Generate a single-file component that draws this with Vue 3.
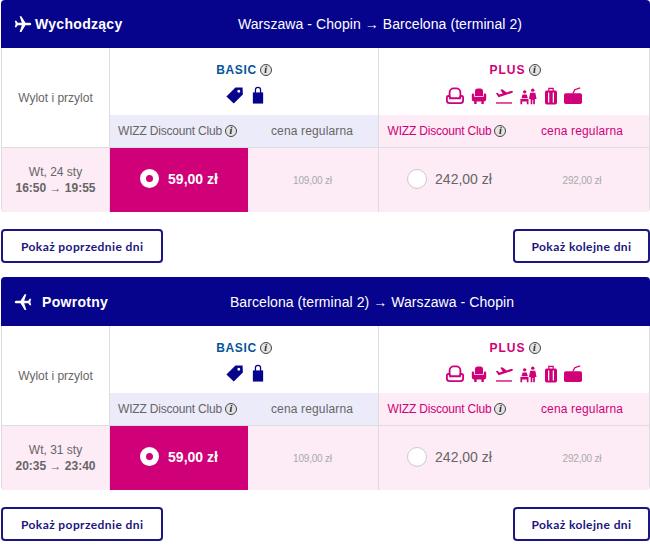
<template>
  <div class="page">
    <section v-for="flight in flights" :key="flight.id" class="flight">
      <header class="flight-head" :class="flight.id">
        <div class="flight-type">
          <svg class="plane" :class="{ back: flight.id === 'back' }" viewBox="0 0 24 24" width="18" height="18">
            <path fill="#fff" d="M23 12c0-1-1-1.800-2.400-1.800h-5.300L9.800 1.500H7.500l2.900 8.700H5L3.100 7.600H1l1.200 4.400L1 16.400h2.100L5 13.800h5.400l-2.900 8.700h2.300l5.500-8.700h5.300C22 13.800 23 13 23 12z" />
          </svg>
          <span>{{ flight.label }}</span>
        </div>
        <div class="flight-route">{{ flight.route }}</div>
      </header>

      <div class="fares">
        <div class="time-label">Wylot i przylot</div>

        <div class="bundle basic">
          <div class="bundle-name">BASIC <i class="info">i</i></div>
          <div class="bundle-icons">
            <svg viewBox="0 0 20 20" width="19" height="19">
              <path fill="#06038d" fill-rule="evenodd" d="M11 1.500l7.500.2.300 7.300-9.600 9.500L1.500 11zM14.500 4a1.500 1.500 0 1 0 .01 0z" />
            </svg>
            <svg viewBox="0 0 14 20" width="12" height="18">
              <path fill="#06038d" d="M1 7h12v13H1z" />
              <path fill="none" stroke="#06038d" stroke-width="1.500" d="M4 8V4a3 3 0 0 1 6 0v4" />
            </svg>
          </div>
        </div>

        <div class="bundle plus">
          <div class="bundle-name">PLUS <i class="info">i</i></div>
          <div class="bundle-icons pink">
            <svg viewBox="0 0 20 20" width="18" height="18">
              <path fill="none" stroke="#cf0078" stroke-width="2" d="M4 11V6a4.500 4.500 0 0 1 4.500-4.500h3A4.500 4.500 0 0 1 16 6v5" />
              <path fill="none" stroke="#cf0078" stroke-width="2" d="M2.500 10c1.200 0 2 1 2 2.500h11c0-1.500.8-2.500 2-2.500.8 0 1.500.7 1.500 1.500V15a3 3 0 0 1-3 3H4a3 3 0 0 1-3-3v-3.500C1 10.700 1.700 10 2.500 10z" />
            </svg>
            <svg viewBox="0 0 20 20" width="16" height="16">
              <path fill="#cf0078" d="M5 4a3.500 3.500 0 0 1 3.500-3.500h3A3.500 3.500 0 0 1 15 4v6H5zM1 8.500C1 7.700 1.700 7 2.500 7S4 7.700 4 8.500V11h12V8.500c0-.8.7-1.500 1.500-1.500S19 7.700 19 8.500V14a3 3 0 0 1-3 3v3h-3v-3H7v3H4v-3a3 3 0 0 1-3-3z" />
            </svg>
            <svg viewBox="0 0 20 20" width="18" height="18">
              <path fill="#cf0078" d="M1 7l1.800-.5 2 1.700 3.700-1.100L6 3l2-.5 5 3.500 4.500-1.500c1-.3 2.200-.2 2.500.5.200.7-.5 1.300-1.500 1.700L4 11.500z" />
              <path fill="#cf0078" d="M1 17h18v1.500H1z" />
            </svg>
            <svg viewBox="0 0 20 20" width="17" height="17">
              <circle cx="5.500" cy="4.500" r="2" fill="#cf0078" />
              <circle cx="15" cy="2.500" r="2" fill="#cf0078" />
              <path fill="#cf0078" d="M3 7.500h5l1.200 4.500H1.800zM.5 13H10v6H8v-3H2.500v3H.5zM12 5.500h6l1.500 7.500h-2v6h-2v-5h-1v5h-2v-6h-2z" />
            </svg>
            <svg viewBox="0 0 14 20" width="12" height="18">
              <path fill="none" stroke="#cf0078" stroke-width="1.500" d="M4.500 4V1h5v3" />
              <path fill="#cf0078" fill-rule="evenodd" d="M2 3.500h10a2 2 0 0 1 2 2V18a2 2 0 0 1-2 2H2a2 2 0 0 1-2-2V5.500a2 2 0 0 1 2-2zM3.500 6v11.500H5V6zM9 6v11.500h1.500V6z" />
            </svg>
            <svg viewBox="0 0 20 20" width="18" height="18">
              <path fill="#cf0078" d="M2 7h16a2 2 0 0 1 2 2v8a2 2 0 0 1-2 2H2a2 2 0 0 1-2-2V9a2 2 0 0 1 2-2z" />
              <path fill="none" stroke="#cf0078" stroke-width="1.500" d="M10 7l2-4 6-2" />
            </svg>
          </div>
        </div>

        <div class="fare-label club club-basic">WIZZ Discount Club <i class="info">i</i></div>
        <div class="fare-label regular regular-basic">cena regularna</div>
        <div class="fare-label club club-plus">WIZZ Discount Club <i class="info">i</i></div>
        <div class="fare-label regular regular-plus">cena regularna</div>

        <div class="time-cell">
          <div>{{ flight.date }}</div>
          <strong>{{ flight.times }}</strong>
        </div>
        <div class="price selected">
          <span class="radio on"></span>
          <span>59,00 zł</span>
        </div>
        <div class="price old old-basic">109,00 zł</div>
        <div class="price plus-price">
          <span class="radio"></span>
          <span>242,00 zł</span>
        </div>
        <div class="price old">292,00 zł</div>
      </div>

      <div class="day-nav">
        <button type="button">Pokaż poprzednie dni</button>
        <button type="button">Pokaż kolejne dni</button>
      </div>
    </section>
  </div>
</template>

<script setup>
const flights = [
  {
    id: "out",
    label: "Wychodzący",
    route: "Warszawa - Chopin → Barcelona (terminal 2)",
    date: "Wt, 24 sty",
    times: "16:50 → 19:55",
  },
  {
    id: "back",
    label: "Powrotny",
    route: "Barcelona (terminal 2) → Warszawa - Chopin",
    date: "Wt, 31 sty",
    times: "20:35 → 23:40",
  },
];
</script>

<style>
html,
body {
  margin: 0;
  background: #fff;
}
</style>

<style scoped>
.page {
  width: 650px;
  height: 545px;
  overflow: hidden;
  font-family: "Liberation Sans", Arial, sans-serif;
  color: #666;
}

.flight {
  margin-bottom: 14px;
}

.flight-head {
  display: flex;
  align-items: center;
  height: 48px;
  margin-left: 1px;
  background: #06038d;
  border-radius: 4px 4px 0 0;
  color: #fff;
}

.flight-head.back {
  height: 49px;
}

.flight-type {
  display: flex;
  align-items: center;
  gap: 3px;
  width: 196px;
  padding-left: 13px;
  box-sizing: border-box;
  font-size: 14px;
  font-weight: bold;
  letter-spacing: 0.3px;
}

.flight-head.back .flight-type {
  gap: 10px;
}

.plane.back {
  transform: scaleX(-1);
}

.flight-route {
  flex: 1;
  padding-right: 87px;
  font-size: 14px;
  letter-spacing: 0.07px;
  text-align: center;
}

.flight-head.back .flight-route {
  padding-right: 103px;
}

.fares {
  display: grid;
  grid-template-columns: 108px 138px 131px 136px 134px;
  grid-template-rows: 67px 33px 64px;
  margin-left: 1px;
  border: 1px solid #ddd;
  border-top: 0;
  border-radius: 0 0 4px 4px;
  box-sizing: border-box;
  width: 649px;
  height: 164px;
  font-size: 12px;
}

.time-label {
  grid-row: 1 / 3;
  display: flex;
  align-items: center;
  justify-content: center;
  border-right: 1px solid #ddd;
  border-bottom: 1px solid #ddd;
  padding-top: 1px;
}

.bundle {
  grid-column: span 2;
  text-align: center;
  padding-top: 15px;
}

.bundle.basic {
  color: #06559c;
  border-right: 1px solid #ddd;
}

.bundle.plus {
  color: #cf0078;
}

.bundle-name {
  display: flex;
  align-items: center;
  justify-content: center;
  gap: 3px;
  font-size: 12px;
  font-weight: bold;
  letter-spacing: 0.6px;
}

.bundle.plus .bundle-name {
  letter-spacing: 1px;
  padding-left: 2px;
}

.bundle-icons {
  display: flex;
  align-items: center;
  justify-content: center;
  gap: 8px;
  height: 20px;
  margin-top: 8px;
}

.bundle-icons.pink {
  gap: 7.5px;
  margin-top: 9px;
}

.info {
  display: inline-block;
  box-sizing: border-box;
  width: 12px;
  height: 12px;
  border: 1px solid #444;
  border-radius: 50%;
  background: #e4e4e4;
  color: #222;
  font: italic bold 10px/10px "Liberation Serif", serif;
  text-align: center;
  letter-spacing: 0;
}

.fare-label {
  display: flex;
  align-items: center;
  justify-content: center;
  gap: 3px;
  white-space: nowrap;
  border-bottom: 1px solid #ddd;
}

.fare-label.club {
  letter-spacing: -0.2px;
}

.fare-label.regular {
  letter-spacing: 0.15px;
}

.club-basic,
.regular-basic {
  background: #ecebfa;
}

.club-basic {
  padding-right: 3px;
}

.regular-basic {
  border-right: 1px solid #ddd;
  padding-right: 2px;
}

.club-plus,
.regular-plus {
  background: #fdebf6;
  color: #cf0078;
}

.time-cell {
  text-align: center;
  background: #fdebf6;
  border-right: 1px solid #ddd;
  padding-top: 16px;
  line-height: 16px;
  border-radius: 0 0 0 4px;
}

.price {
  display: flex;
  align-items: center;
  justify-content: center;
  padding-bottom: 3px;
  background: #fdebf6;
}

.price.selected {
  gap: 9px;
  background: #cf0078;
  color: #fff;
  font-size: 14px;
  font-weight: bold;
}

.price.plus-price {
  gap: 8px;
  padding-left: 5px;
  font-size: 14px;
}

.price.old {
  padding-bottom: 0;
  font-size: 10px;
  letter-spacing: -0.2px;
  color: #aaa;
}

.price.old-basic {
  padding-right: 1px;
  border-right: 1px solid #ddd;
}

.radio {
  box-sizing: border-box;
  width: 20px;
  height: 20px;
  border: 1px solid #ccc;
  border-radius: 50%;
  background: radial-gradient(circle at 50% 35%, #fff 55%, #f0f0f0);
}

.radio.on {
  width: 19px;
  height: 19px;
  border: 6px solid #fff;
  background: #cf0078;
}

.day-nav {
  display: flex;
  justify-content: space-between;
  margin: 17px 0 0 1px;
}

.day-nav button {
  box-sizing: border-box;
  height: 34px;
  padding: 0 18px;
  border: 2px solid #1c1680;
  border-radius: 4px;
  background: #fff;
  color: #1c1680;
  font-family: Lato, sans-serif;
  font-size: 12px;
  font-weight: bold;
  letter-spacing: 0.4px;
}

.day-nav button:last-child {
  width: 137px;
  padding: 0;
}
</style>
